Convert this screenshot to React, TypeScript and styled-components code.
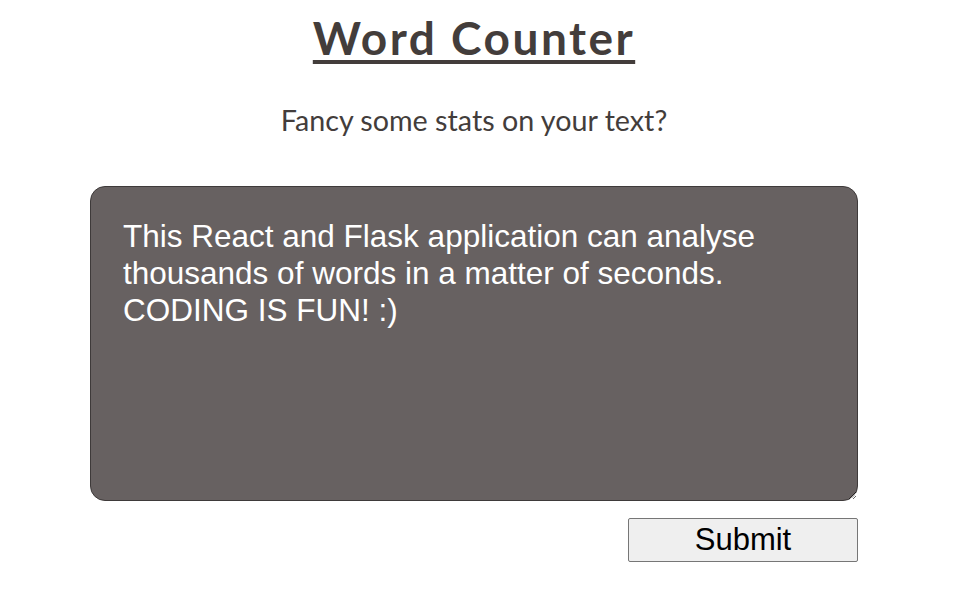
import styled, { createGlobalStyle } from 'styled-components'

const GlobalStyle = createGlobalStyle`
  body {
    margin: 0;
    background: #fff;
    font-family: 'Lato', sans-serif;
  }
`

const App = () => {
  return (
    <Page>
      <GlobalStyle />
      <Title>Word Counter</Title>
      <Subtitle>Fancy some stats on your text?</Subtitle>
      <Form onSubmit={(e) => e.preventDefault()}>
        <TextBox
          defaultValue={
            'This React and Flask application can analyse thousands of words in a matter of seconds. CODING IS FUN! :)'
          }
        />
        <SubmitButton type="submit">Submit</SubmitButton>
      </Form>
    </Page>
  )
}

export default App

const Page = styled.div`
  display: flex;
  flex-direction: column;
  align-items: center;
  width: 948px;
  padding-top: 10px;
`

const Title = styled.h1`
  font-family: 'Lato', sans-serif;
  font-weight: 700;
  font-size: 46px;
  line-height: 1.2;
  letter-spacing: 2.5px;
  color: #433d3b;
  text-decoration: underline;
  text-decoration-thickness: 4px;
  text-underline-offset: 5px;
  margin: 0;
`

const Subtitle = styled.p`
  font-family: 'Lato', sans-serif;
  font-size: 28.7px;
  line-height: 1.2;
  color: #433d3b;
  margin: 38px 0 0;
`

const Form = styled.form`
  display: flex;
  flex-direction: column;
  align-items: flex-end;
  gap: 17px;
  margin-top: 48px;
  width: 768px;
`

const TextBox = styled.textarea`
  box-sizing: border-box;
  width: 768px;
  height: 315px;
  padding: 31px 32px;
  background: #676161;
  color: #fff;
  border: 1px solid #3e3a3a;
  border-radius: 15px;
  font-family: 'Liberation Sans', Arial, sans-serif;
  font-size: 31.5px;
  line-height: normal;
  outline: none;
`

const SubmitButton = styled.button`
  box-sizing: border-box;
  width: 230px;
  height: 44px;
  background: #efefef;
  border: 1px solid #767676;
  border-radius: 2px;
  font-family: 'Liberation Sans', Arial, sans-serif;
  font-size: 31px;
  color: #000;
  padding: 0;
`
